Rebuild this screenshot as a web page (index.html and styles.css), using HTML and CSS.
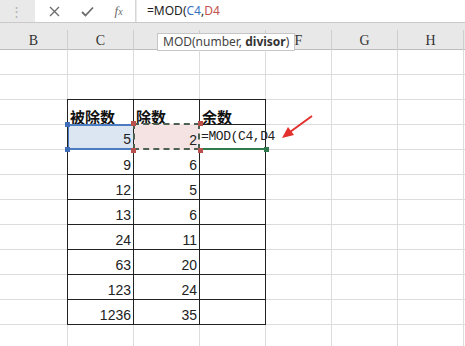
FILE: index.html
```html
<!DOCTYPE html>
<html lang="zh-CN">
<head>
  <meta charset="UTF-8">
  <title>MOD 函数</title>
  <link rel="stylesheet" href="styles.css">
</head>
<body>
  <div class="toolbar">
    <div class="grip">⋮</div>
    <div class="btns">
      <svg width="11" height="11" viewBox="0 0 11 11"><path d="M1 1L10 10M10 1L1 10" stroke="#6e6e6e" stroke-width="1.4" fill="none"/></svg>
      <svg width="13" height="11" viewBox="0 0 13 11"><path d="M1 6L4.5 9.5L12 1.5" stroke="#6e6e6e" stroke-width="1.8" fill="none"/></svg>
      <i class="fx">f<small>x</small></i>
    </div>
    <div class="formula">=MOD(<span class="ref-c">C4</span>,<span class="ref-d">D4</span></div>
  </div>

  <div class="colhead">
    <div class="col">B</div>
    <div class="col">C</div>
    <div class="col"></div>
    <div class="col"></div>
    <div class="col">F</div>
    <div class="col">G</div>
    <div class="col">H</div>
    <div class="tip">MOD(number, <b>divisor</b>)</div>
  </div>

  <div class="sheet">
    <div class="data">
      <div class="cell head">被除数</div>
      <div class="cell head">除数</div>
      <div class="cell head">余数</div>

      <div class="cell num ref-blue">5<span class="h tl"></span><span class="h bl"></span></div>
      <div class="cell num ref-red">2<span class="h tl"></span><span class="h bl"></span><span class="h tr"></span><span class="h br"></span></div>
      <div class="cell editing">=MOD(C4,D4<span class="h gr"></span></div>

      <div class="cell num">9</div><div class="cell num">6</div><div class="cell"></div>
      <div class="cell num">12</div><div class="cell num">5</div><div class="cell"></div>
      <div class="cell num">13</div><div class="cell num">6</div><div class="cell"></div>
      <div class="cell num">24</div><div class="cell num">11</div><div class="cell"></div>
      <div class="cell num">63</div><div class="cell num">20</div><div class="cell"></div>
      <div class="cell num">123</div><div class="cell num">24</div><div class="cell"></div>
      <div class="cell num">1236</div><div class="cell num">35</div><div class="cell"></div>
    </div>

    <svg class="arrow" width="40" height="30" viewBox="0 0 40 30">
      <path d="M34 2L12 18" stroke="#e2302d" stroke-width="2" fill="none"/>
      <polygon points="4,24 10,13 16,21" fill="#e2302d"/>
    </svg>
  </div>
</body>
</html>
```

FILE: styles.css
```css
body {
  margin: 0;
  width: 465px;
  height: 346px;
  overflow: hidden;
  background: #fff;
  font-family: "Noto Sans", sans-serif;
}

/* formula bar */
.toolbar {
  display: flex;
  height: 22px;
  border-bottom: 1px solid #c9c9c9;
  background: #e9e9e9;
}
.grip {
  width: 33px;
  color: #b4b4b4;
  font-size: 13px;
  line-height: 22px;
  text-align: center;
}
.btns {
  display: flex;
  align-items: center;
  justify-content: space-around;
  width: 101px;
  margin-left: 2px;
  padding: 0 2px 0 4px;
  box-sizing: border-box;
  background: #fff;
  border-right: 1px solid #d6d6d6;
}
.fx {
  font-family: "Liberation Serif", serif;
  font-size: 13px;
  color: #6a6a6a;
}
.fx small {
  font-size: 10px;
}
.formula {
  flex: 1;
  margin-left: 1px;
  padding-left: 10px;
  background: #fff;
  font-size: 12px;
  line-height: 22px;
  color: #222;
}
.ref-c { color: #3a72c2; }
.ref-d { color: #c2504b; }

/* column header */
.colhead {
  position: relative;
  display: grid;
  grid-template-columns: 68px repeat(6, 66px);
  height: 19px;
  padding-top: 7px;
  border-bottom: 1px solid #bdbdbd;
  background: #e8e8e8;
}
.col {
  border-right: 1px solid #cfcfcf;
  font-family: "Liberation Serif", serif;
  font-size: 14px;
  line-height: 22px;
  color: #333;
  text-align: center;
}
.tip {
  position: absolute;
  top: 10px;
  left: 157px;
  padding: 0 5px;
  height: 16px;
  background: #fff;
  border: 1px solid #c6c6c6;
  font-size: 12px;
  line-height: 16px;
  color: #444;
  white-space: nowrap;
}
.tip b { color: #333; }

/* sheet */
.sheet {
  position: relative;
  height: 296px;
  overflow: hidden;
  background-image:
    repeating-linear-gradient(to bottom, transparent 0 24px, #dcdcdc 24px 25px),
    linear-gradient(#dcdcdc, #dcdcdc), linear-gradient(#dcdcdc, #dcdcdc),
    linear-gradient(#dcdcdc, #dcdcdc), linear-gradient(#dcdcdc, #dcdcdc),
    linear-gradient(#dcdcdc, #dcdcdc), linear-gradient(#dcdcdc, #dcdcdc),
    linear-gradient(#dcdcdc, #dcdcdc);
  background-size: 100% 100%, 1px 100%, 1px 100%, 1px 100%, 1px 100%, 1px 100%, 1px 100%, 1px 100%;
  background-position: 0 0, 67px 0, 133px 0, 199px 0, 265px 0, 331px 0, 397px 0, 463px 0;
  background-repeat: no-repeat;
}
.data {
  display: grid;
  grid-template-columns: repeat(3, 66px);
  grid-auto-rows: 25px;
  width: 199px;
  margin: 49px 0 0 67px;
  border-left: 1px solid #222;
  border-top: 1px solid #222;
  box-sizing: border-box;
  background: #fff;
}
.cell {
  position: relative;
  display: flex;
  align-items: flex-end;
  padding: 0 2px 2px;
  border-right: 1px solid #222;
  border-bottom: 1px solid #222;
  font-family: "Liberation Sans", sans-serif;
  font-size: 14px;
  line-height: 14px;
  color: #222;
  white-space: nowrap;
}
.head {
  padding-bottom: 0;
  font-family: "Noto Sans CJK SC", sans-serif;
  font-weight: 700;
  font-size: 15px;
  line-height: 15px;
  color: #111;
}
.num {
  justify-content: flex-end;
}
.editing {
  padding: 0 0 4px 1px;
  font-family: "Liberation Mono", monospace;
  font-size: 13px;
  letter-spacing: -0.4px;
  border-bottom: 2px solid #2f7a4c;
}

/* reference highlights */
.ref-blue {
  background: #dce6f2;
  border-top: 2px solid #4b7bc0;
  margin-top: -1px;
  border-bottom: 2px solid #4b7bc0;
  box-shadow: inset 1px 0 0 #4b7bc0;
}
.ref-red {
  background: #f5e3e3;
  border-right-color: #f5e3e3;
  border-bottom-color: #f5e3e3;
}
.ref-red::before {
  content: "";
  position: absolute;
  top: -1px;
  left: 0;
  right: 0;
  height: 1px;
  background: #f5e3e3;
}
.ref-red::after {
  content: "";
  position: absolute;
  top: -2px;
  left: -1px;
  right: -1px;
  bottom: -1px;
  border: 2px dashed #4d6152;
}
.h {
  position: absolute;
  z-index: 1;
  width: 5px;
  height: 5px;
}
.ref-blue .h { background: #3f6db8; }
.ref-red .h { background: #b9504c; }
.editing .h { background: #2f7a4c; }
.tl { top: -4px; left: -3px; }
.bl { bottom: -4px; left: -3px; }
.tr { top: -4px; right: -4px; }
.br { bottom: -4px; right: -4px; }
.gr { bottom: -4px; right: -4px; }

.arrow {
  position: absolute;
  left: 278px;
  top: 64px;
}
```
